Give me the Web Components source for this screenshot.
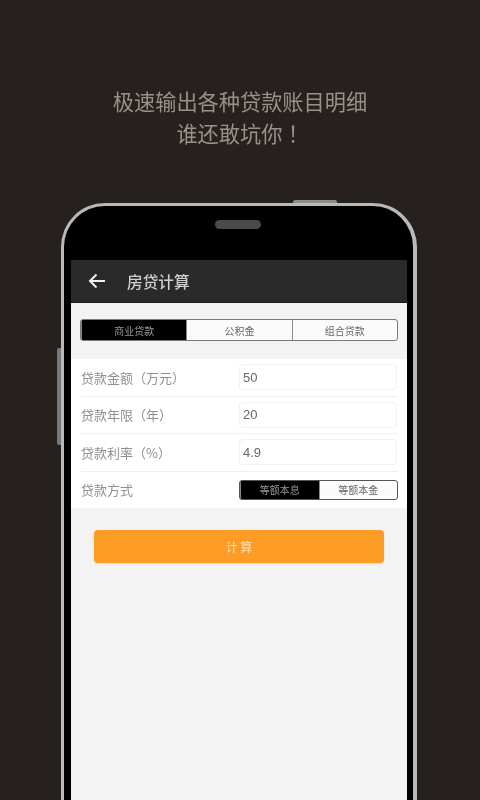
<!DOCTYPE html>
<html lang="zh">
<head>
<meta charset="utf-8">
<title>房贷计算</title>
<style>
  html, body { margin: 0; height: 800px; overflow: hidden; background: #26211e; }
  body { font-family: "Noto Sans CJK SC", "Liberation Sans", sans-serif; }
</style>
</head>
<body>

<promo-headline>
  <span>极速输出各种贷款账目明细</span>
  <span>谁还敢坑你<span lang="zh-Hant" style='font-family: "Noto Sans CJK TC", sans-serif'>！</span></span>
</promo-headline>

<phone-frame>
  <app-bar title="房贷计算"></app-bar>
  <seg-control class="loan" active="0" items="商业贷款,公积金,组合贷款"></seg-control>
  <loan-form>
    <form-row label="贷款金额（万元）"><text-field value="50"></text-field></form-row>
    <form-row label="贷款年限（年）"><text-field value="20"></text-field></form-row>
    <form-row label="贷款利率（%）"><text-field value="4.9"></text-field></form-row>
    <form-row label="贷款方式" last><seg-control class="mode" active="0" items="等额本息,等额本金"></seg-control></form-row>
  </loan-form>
  <action-button>计 算</action-button>
</phone-frame>

<script>
class PromoHeadline extends HTMLElement {
  constructor() {
    super();
    this.attachShadow({ mode: 'open' });
    this.shadowRoot.innerHTML = `
      <style>
        :host {
          display: block;
          height: 203px;
          box-sizing: border-box;
          padding-top: 85px;
          color: #9a908a;
          font-size: 21.2px;
          line-height: 32px;
          text-align: center;
          filter: blur(.6px);
        }
        ::slotted(span) { display: block; }
      </style>
      <slot></slot>`;
  }
}

class PhoneFrame extends HTMLElement {
  constructor() {
    super();
    this.attachShadow({ mode: 'open' });
    this.shadowRoot.innerHTML = `
      <style>
        :host {
          display: block;
          position: relative;
          box-sizing: border-box;
          width: 356px;
          height: 597px;
          margin-left: 61px;
          background: #000;
          border: 3px solid #b9b9ba;
          border-right-width: 4px;
          border-bottom: 0;
          border-radius: 44px 44px 0 0;
          padding: 0 6px 0 7px;
        }
        .speaker {
          width: 46px;
          height: 9px;
          margin: 14px 0 31px 144px;
          border-radius: 5px;
          background: #4a4a4a;
          filter: blur(.6px);
        }
        .screen {
          height: 540px;
          background: #f3f3f3;
        }
        .bump {
          position: absolute;
          left: 229px;
          top: -6px;
          width: 44px;
          height: 3px;
          border-radius: 2px 2px 0 0;
          background: #8d8d8e;
        }
        .side {
          position: absolute;
          left: -7px;
          top: 142px;
          width: 4px;
          height: 97px;
          border-radius: 2px 0 0 2px;
          background: #77777a;
        }
      </style>
      <div class="bump"></div>
      <div class="side"></div>
      <div class="speaker"></div>
      <div class="screen"><slot></slot></div>`;
  }
}

class AppBar extends HTMLElement {
  constructor() {
    super();
    this.attachShadow({ mode: 'open' });
    this.shadowRoot.innerHTML = `
      <style>
        :host {
          display: flex;
          align-items: center;
          height: 43px;
          padding-left: 17px;
          background: #2a2a2a;
          color: #cfcfcf;
          font-size: 15.7px;
          font-weight: 500;
          border-bottom: 1px solid #1c1c1c;
          box-sizing: border-box;
        }
        svg { display: block; margin-right: 21px; filter: blur(.3px); }
        span { filter: blur(.5px); }
      </style>
      <svg width="18" height="18" viewBox="0 0 18 18" fill="none" stroke="#f2f2f2" stroke-width="2">
        <path d="M17 9H2M8.5 2.5 2 9l6.5 6.5"/>
      </svg>
      <span>${this.getAttribute('title') || ''}</span>`;
  }
}

class SegControl extends HTMLElement {
  constructor() {
    super();
    this.attachShadow({ mode: 'open' });
    const active = Number(this.getAttribute('active') || 0);
    const items = (this.getAttribute('items') || '').split(',');
    const buttons = items.map((t, i) => `<div class="seg${i === active ? ' on' : ''}"><span>${t}</span></div>`).join('');
    this.shadowRoot.innerHTML = `
      <style>
        :host {
          display: flex;
          box-sizing: border-box;
          border: 1px solid #7a7a7a;
          border-radius: 3px;
          overflow: hidden;
          background: #fbfbfb;
          color: #666;
          font-size: 10px;
        }
        :host(.loan) { height: 22px; margin: 16px 9px 18px; }
        :host(.mode) { height: 20px; width: 159px; border-color: #555; }
        .seg {
          flex: 1;
          display: flex;
          align-items: center;
          justify-content: center;
          border-left: 1px solid #8a8a8a;
        }
        .seg:first-child { border-left: 0; }
        .on { background: #000; color: #999; }
        span { filter: blur(.4px); }
      </style>
      ${buttons}`;
  }
}

class LoanForm extends HTMLElement {
  constructor() {
    super();
    this.attachShadow({ mode: 'open' });
    this.shadowRoot.innerHTML = `
      <style>
        :host {
          display: block;
          padding: 0 9px 0 10px;
          background: #fff;
        }
      </style>
      <slot></slot>`;
  }
}

class FormRow extends HTMLElement {
  constructor() {
    super();
    this.attachShadow({ mode: 'open' });
    this.shadowRoot.innerHTML = `
      <style>
        :host {
          display: flex;
          align-items: center;
          box-sizing: border-box;
          height: 37.5px;
          border-bottom: 1px solid #efefef;
          color: #8f8f8f;
          font-size: 13px;
        }
        :host([last]) { height: 36.5px; border-bottom: 0; }
        .label { width: 158px; filter: blur(.5px); }
      </style>
      <div class="label">${this.getAttribute('label') || ''}</div>
      <slot></slot>`;
  }
}

class TextField extends HTMLElement {
  constructor() {
    super();
    this.attachShadow({ mode: 'open' });
    this.shadowRoot.innerHTML = `
      <style>
        :host {
          display: flex;
          align-items: center;
          box-sizing: border-box;
          width: 158px;
          height: 26px;
          padding-left: 3px;
          border: 1px solid #f1f1f1;
          border-radius: 4px;
          background: #fff;
          color: #666;
          font: 13px "Liberation Sans", sans-serif;
        }
        span { filter: blur(.4px); }
      </style>
      <span>${this.getAttribute('value') || ''}</span>`;
  }
}

class ActionButton extends HTMLElement {
  constructor() {
    super();
    this.attachShadow({ mode: 'open' });
    this.shadowRoot.innerHTML = `
      <style>
        :host {
          display: flex;
          align-items: center;
          justify-content: center;
          height: 33px;
          margin: 22px 23px 0;
          border-radius: 4px;
          background: #fd9d26;
          box-shadow: 0 1px 2px #d9d9d9;
          color: #fde0b6;
          font-size: 12px;
        }
        span { filter: blur(.4px); }
      </style>
      <span><slot></slot></span>`;
  }
}

customElements.define('promo-headline', PromoHeadline);
customElements.define('phone-frame', PhoneFrame);
customElements.define('app-bar', AppBar);
customElements.define('seg-control', SegControl);
customElements.define('loan-form', LoanForm);
customElements.define('form-row', FormRow);
customElements.define('text-field', TextField);
customElements.define('action-button', ActionButton);
</script>
</body>
</html>
